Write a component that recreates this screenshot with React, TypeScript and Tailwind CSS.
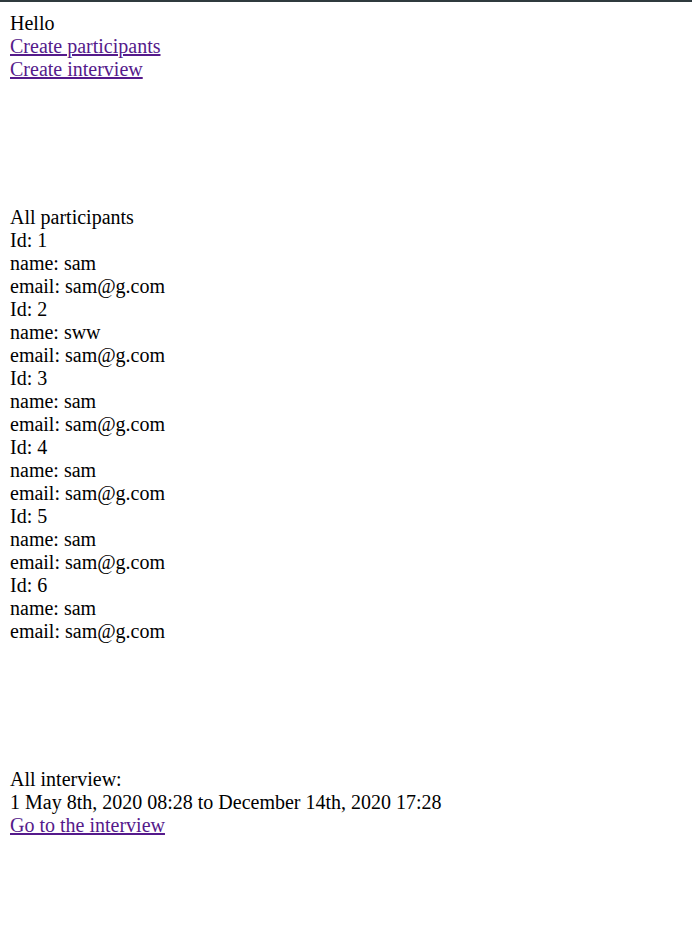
import React from "react";

const participants = [
  { id: 1, name: "sam", email: "sam@g.com" },
  { id: 2, name: "sww", email: "sam@g.com" },
  { id: 3, name: "sam", email: "sam@g.com" },
  { id: 4, name: "sam", email: "sam@g.com" },
  { id: 5, name: "sam", email: "sam@g.com" },
  { id: 6, name: "sam", email: "sam@g.com" },
];

export default function App() {
  const link = "text-[#551a8b] underline block w-fit";
  return (
    <div
      className="min-h-[935px] bg-white border-t-2 border-[#2f3a3e] pt-[10px] px-[10px] text-black text-[20px] leading-[23px]"
      style={{ fontFamily: '"Liberation Serif", "Times New Roman", serif' }}
    >
      <div>Hello</div>
      <a href="#" className={link}>Create participants</a>
      <a href="#" className={link}>Create interview</a>
      <div className="mt-[125px]">
        <div>All participants</div>
        {participants.map((p) => (
          <div key={p.id}>
            <div>Id: {p.id}</div>
            <div>name: {p.name}</div>
            <div>email: {p.email}</div>
          </div>
        ))}
      </div>
      <div className="mt-[125px]">
        <div>All interview:</div>
        <div>1 May 8th, 2020 08:28 to December 14th, 2020 17:28</div>
        <a href="#" className={link}>Go to the interview</a>
      </div>
    </div>
  );
}
